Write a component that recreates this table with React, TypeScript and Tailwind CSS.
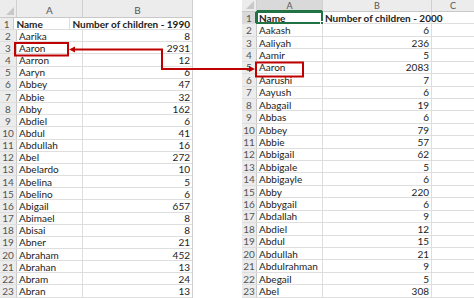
import React from 'react';

type Row = [string, number];

const left: Row[] = [
  ['Aarika', 8], ['Aaron', 2931], ['Aarron', 12], ['Aaryn', 6], ['Abbey', 47], ['Abbie', 32],
  ['Abby', 162], ['Abdiel', 6], ['Abdul', 41], ['Abdullah', 16], ['Abel', 272], ['Abelardo', 10],
  ['Abelina', 5], ['Abelino', 6], ['Abigail', 657], ['Abimael', 8], ['Abisai', 8], ['Abner', 21],
  ['Abraham', 452], ['Abrahan', 13], ['Abram', 24], ['Abran', 13],
];

const right: Row[] = [
  ['Aakash', 6], ['Aaliyah', 236], ['Aamir', 5], ['Aaron', 2083], ['Aarushi', 7], ['Aayush', 6],
  ['Abagail', 19], ['Abbas', 6], ['Abbey', 79], ['Abbie', 57], ['Abbigail', 62], ['Abbigale', 5],
  ['Abbigayle', 6], ['Abby', 220], ['Abbygail', 6], ['Abdallah', 9], ['Abdiel', 12], ['Abdul', 15],
  ['Abdullah', 21], ['Abdulrahman', 9], ['Abegail', 5], ['Abel', 308],
];

function Corner() {
  return (
    <svg width="8" height="8" viewBox="0 0 8 8" className="absolute right-[2px] bottom-[2px]">
      <polygon points="8,0 8,8 0,8" fill="#c8c8c8" />
    </svg>
  );
}

function LeftSheet() {
  const rowH = 'h-[12.17px]';
  return (
    <div className="w-[193px] shrink-0 border-r border-[#d0d0d0]">
      <div className="flex h-[18px] bg-[#ececec] border-b border-[#c8c8c8] text-[#555]">
        <div className="relative w-[17px] border-r border-[#d0d0d0]"><Corner /></div>
        <div className="w-[66px] border-r border-[#d0d0d0] flex items-end justify-center pb-[2px]">A</div>
        <div className="flex-1 flex items-end justify-center pb-[2px]">B</div>
      </div>
      {[['Name', 'Number of children - 1990'] as [string, string], ...left.map(([n, v]) => [n, String(v)] as [string, string])].map(([n, v], i) => (
        <div key={i} className={`flex ${rowH} border-b border-[#dedede]`}>
          <div className="w-[17px] bg-[#ececec] border-r border-[#c8c8c8] text-[#555] flex items-center justify-center">{i + 1}</div>
          <div className={`w-[66px] border-r border-[#dedede] px-[2px] flex items-center whitespace-nowrap ${i === 0 ? 'font-bold' : ''}`}>{n}</div>
          <div className={`flex-1 px-[2px] flex items-center whitespace-nowrap ${i === 0 ? 'font-bold justify-start' : 'justify-end'}`}>{v}</div>
        </div>
      ))}
    </div>
  );
}

function RightSheet() {
  const rowH = 'h-[12.43px]';
  return (
    <div className="flex-1">
      <div className="flex h-[12px] bg-[#ececec] border-b border-[#c8c8c8] text-[#555] text-[9px]">
        <div className="relative w-[15px] border-r border-[#d0d0d0]"><Corner /></div>
        <div className="relative w-[66px] bg-[#d9d9d9] border-r border-[#d0d0d0] flex items-center justify-center">
          A
          <div className="absolute inset-x-0 bottom-[-1px] h-[2px] bg-[#217346]" />
        </div>
        <div className="w-[109px] border-r border-[#d0d0d0] flex items-center justify-center">B</div>
        <div className="flex-1 flex items-center justify-center">C</div>
      </div>
      {[['Name', 'Number of children - 2000'] as [string, string], ...right.map(([n, v]) => [n, String(v)] as [string, string])].map(([n, v], i) => (
        <div key={i} className={`flex ${rowH} border-b border-[#dedede]`}>
          <div className={`relative w-[15px] border-r border-[#c8c8c8] text-[#555] flex items-center justify-center ${i === 0 ? 'bg-[#d9d9d9]' : 'bg-[#ececec]'}`}>
            {i + 1}
            {i === 0 && <div className="absolute inset-y-0 right-[-1px] w-[2px] bg-[#217346]" />}
          </div>
          <div className={`relative w-[66px] border-r border-[#dedede] px-[2px] flex items-center whitespace-nowrap ${i === 0 ? 'font-bold' : ''}`}>
            {n}
            {i === 0 && (
              <div className="absolute inset-x-[-1px] top-[-1px] bottom-[-1px] border-2 border-[#217346]">
                <div className="absolute right-[-3px] bottom-[-3px] w-[4px] h-[4px] bg-[#217346] border border-white" />
              </div>
            )}
          </div>
          <div className={`w-[109px] border-r border-[#dedede] px-[2px] flex items-center whitespace-nowrap ${i === 0 ? 'font-bold justify-start' : 'justify-end'}`}>{v}</div>
          <div className="flex-1" />
        </div>
      ))}
    </div>
  );
}

export default function App() {
  return (
    <div className="relative w-[474px] h-[298px] overflow-hidden bg-white text-[10px] leading-none text-[#222]" style={{ fontFamily: 'Lato, "Liberation Sans", sans-serif' }}>
      <div className="flex">
        <LeftSheet />
        <div className="w-[49px] shrink-0" />
        <RightSheet />
      </div>
      <svg className="absolute inset-0 pointer-events-none" width="474" height="298" viewBox="0 0 474 298">
        <rect x="15" y="43" width="53" height="12.5" fill="none" stroke="#c00000" strokeWidth="2" />
        <rect x="256" y="62.5" width="47" height="14" fill="none" stroke="#c00000" strokeWidth="2" />
        <polyline points="74,49.5 162,49.5 162,69 250,69" fill="none" stroke="#c00000" strokeWidth="2" />
        <polygon points="69,49.5 75,46.5 75,52.5" fill="#c00000" />
        <polygon points="255,69 249,66 249,72" fill="#c00000" />
      </svg>
    </div>
  );
}
